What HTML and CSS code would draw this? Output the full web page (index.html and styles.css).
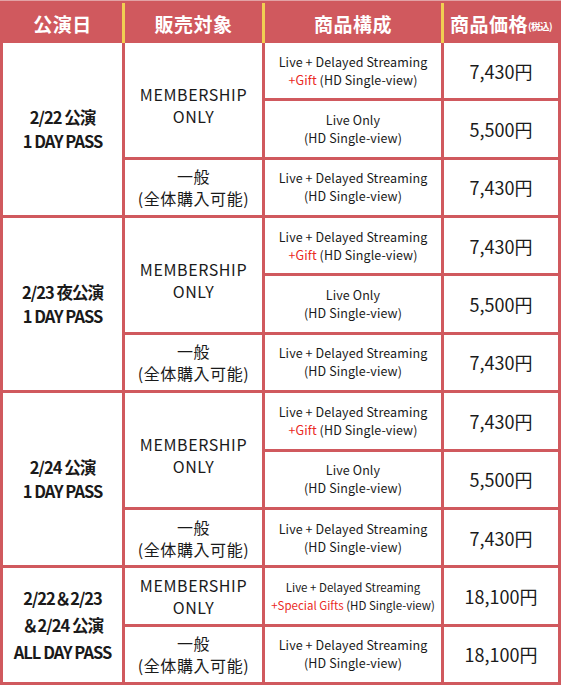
FILE: index.html
```html
<!DOCTYPE html>
<html lang="ja">
<head>
<meta charset="utf-8">
<title>チケット価格表</title>
<link rel="stylesheet" href="styles.css">
</head>
<body>
<div class="price-table">
  <div class="head">
    <div class="hcell">公演日</div>
    <div class="hcell">販売対象</div>
    <div class="hcell">商品構成</div>
    <div class="hcell">商品価格<small>(税込)</small></div>
  </div>
  <div class="body">
    <div class="cell date span3"><div>2/22 公演<br>1 DAY PASS</div></div>
    <div class="cell target span2"><div>MEMBERSHIP<br>ONLY</div></div>
    <div class="cell prod"><div>Live + Delayed Streaming<br><span class="red">+Gift</span> (HD Single-view)</div></div>
    <div class="cell price">7,430円</div>
    <div class="cell prod"><div>Live Only<br>(HD Single-view)</div></div>
    <div class="cell price">5,500円</div>
    <div class="cell target"><div>一般<br>(全体購入可能)</div></div>
    <div class="cell prod"><div>Live + Delayed Streaming<br>(HD Single-view)</div></div>
    <div class="cell price">7,430円</div>

    <div class="cell date span3"><div>2/23 夜公演<br>1 DAY PASS</div></div>
    <div class="cell target span2"><div>MEMBERSHIP<br>ONLY</div></div>
    <div class="cell prod"><div>Live + Delayed Streaming<br><span class="red">+Gift</span> (HD Single-view)</div></div>
    <div class="cell price">7,430円</div>
    <div class="cell prod"><div>Live Only<br>(HD Single-view)</div></div>
    <div class="cell price">5,500円</div>
    <div class="cell target"><div>一般<br>(全体購入可能)</div></div>
    <div class="cell prod"><div>Live + Delayed Streaming<br>(HD Single-view)</div></div>
    <div class="cell price">7,430円</div>

    <div class="cell date span3"><div>2/24 公演<br>1 DAY PASS</div></div>
    <div class="cell target span2"><div>MEMBERSHIP<br>ONLY</div></div>
    <div class="cell prod"><div>Live + Delayed Streaming<br><span class="red">+Gift</span> (HD Single-view)</div></div>
    <div class="cell price">7,430円</div>
    <div class="cell prod"><div>Live Only<br>(HD Single-view)</div></div>
    <div class="cell price">5,500円</div>
    <div class="cell target"><div>一般<br>(全体購入可能)</div></div>
    <div class="cell prod"><div>Live + Delayed Streaming<br>(HD Single-view)</div></div>
    <div class="cell price">7,430円</div>

    <div class="cell date span2 all"><div>2/22＆2/23<br>＆2/24 公演<br>ALL DAY PASS</div></div>
    <div class="cell target"><div>MEMBERSHIP<br>ONLY</div></div>
    <div class="cell prod small"><div>Live + Delayed Streaming<br><span class="red">+Special Gifts</span> (HD Single-view)</div></div>
    <div class="cell price">18,100円</div>
    <div class="cell target"><div>一般<br>(全体購入可能)</div></div>
    <div class="cell prod"><div>Live + Delayed Streaming<br>(HD Single-view)</div></div>
    <div class="cell price">18,100円</div>
  </div>
</div>
</body>
</html>
```
FILE: styles.css
```css
html, body {
  margin: 0;
  padding: 0;
  background: #ffffff;
}
body {
  font-family: "Noto Sans CJK JP", "Noto Sans", sans-serif;
  color: #1a1a1a;
}
.price-table {
  width: 561px;
  box-sizing: border-box;
  background: #d0595e;
  border-top: 1px solid #e2a2a5;
  padding: 2px 3px 3px 3px;
}
.head {
  display: grid;
  grid-template-columns: 119px 137px 176px 114px;
  column-gap: 3px;
  height: 40px;
  background: #f0cf52;
}
.hcell {
  background: #d0595e;
  color: #ffffff;
  font-weight: 700;
  font-size: 19px;
  display: flex;
  align-items: center;
  justify-content: center;
  letter-spacing: 0.5px;
}
.hcell small {
  font-size: 9.5px;
  letter-spacing: -0.5px;
  margin-top: 6px;
}
.body {
  display: grid;
  grid-template-columns: 119px 137px 176px 114px;
  grid-template-rows: repeat(11, 1fr);
  gap: 3px;
  height: 639px;
}
.cell {
  background: #ffffff;
  display: flex;
  align-items: center;
  justify-content: center;
  text-align: center;
  box-sizing: border-box;
}
.span3 { grid-row: span 3; }
.span2 { grid-row: span 2; }
.date {
  font-weight: 700;
  font-size: 16.5px;
  line-height: 24px;
  letter-spacing: -1px;
}
.date.all {
  line-height: 27px;
}
.target {
  font-size: 16px;
  line-height: 22px;
  letter-spacing: 0.6px;
}
.target.span2 {
  padding-top: 10px;
}
.prod {
  font-size: 12.5px;
  line-height: 18px;
  letter-spacing: 0.1px;
  white-space: nowrap;
}
.prod.small {
  font-size: 11.5px;
  letter-spacing: 0;
}
.red {
  color: #ea2a1f;
}
.price {
  font-size: 18px;
  letter-spacing: 0;
}
```
